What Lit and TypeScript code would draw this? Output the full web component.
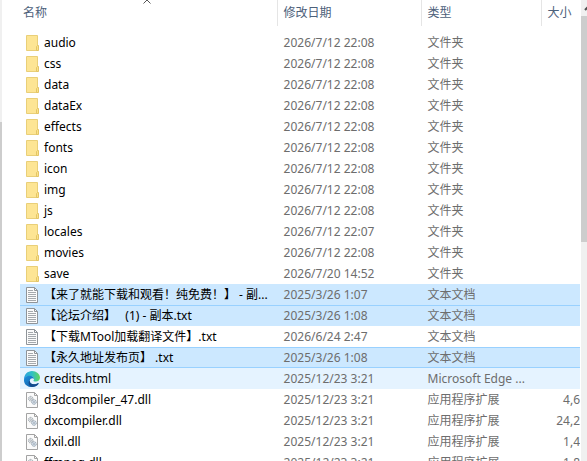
import { LitElement, html, css, svg } from "lit";
import { customElement, property, state } from "lit/decorators.js";
import { classMap } from "lit/directives/class-map.js";

type Kind = "folder" | "text" | "edge" | "dll";

interface Entry {
  name: string;
  date: string;
  kind: Kind;
  size?: string;
  mark?: "selected" | "focused" | "hover";
}

const TYPE_LABEL: Record<Kind, string> = {
  folder: "文件夹",
  text: "文本文档",
  edge: "Microsoft Edge ...",
  dll: "应用程序扩展",
};

const folder = (name: string, date = "2026/7/12 22:08"): Entry => ({ name, date, kind: "folder" });
const dll = (name: string, size: string): Entry => ({ name, date: "2025/12/23 3:21", kind: "dll", size });

const ENTRIES: Entry[] = [
  folder("audio"),
  folder("css"),
  folder("data"),
  folder("dataEx"),
  folder("effects"),
  folder("fonts"),
  folder("icon"),
  folder("img"),
  folder("js"),
  folder("locales", "2026/7/12 22:07"),
  folder("movies"),
  folder("save", "2026/7/20 14:52"),
  { name: "【来了就能下载和观看！纯免费！】 - 副...", date: "2025/3/26 1:07", kind: "text", mark: "selected" },
  { name: "【论坛介绍】   (1) - 副本.txt", date: "2025/3/26 1:08", kind: "text", mark: "selected" },
  { name: "【下载MTool加载翻译文件】.txt", date: "2026/6/24 2:47", kind: "text" },
  { name: "【永久地址发布页】 .txt", date: "2025/3/26 1:08", kind: "text", mark: "focused" },
  { name: "credits.html", date: "2025/12/23 3:21", kind: "edge", mark: "hover" },
  dll("d3dcompiler_47.dll", "4,6"),
  dll("dxcompiler.dll", "24,2"),
  dll("dxil.dll", "1,4"),
  dll("ffmpeg.dll", "1,8"),
];

const GLYPHS = {
  folder: svg`
    <path d="M2.5 .5h11v15h-11z" fill="#fde594" stroke="#e9cf78"/>
    <path d="M12.5 11.500l1-1h1v5h-2z" fill="#fbe28a" stroke="#e3c566"/>`,
  text: svg`
    <path d="M2.5 .5h8l3 3v12h-11z" fill="#fbfbfb" stroke="#8f9499"/>
    <path d="M10.500 .5v3h3" fill="none" stroke="#8f9499"/>
    <path d="M4 3.500h5M4 5.500h8M4 7.500h8M4 9.500h8M4 11.500h8M4 13.500h8" stroke="#a5a9ad"/>`,
  dll: svg`
    <path d="M2.5 .5h8l3 3v12h-11z" fill="#fbfbfb" stroke="#a3a3a3"/>
    <path d="M10.500 .5v3h3" fill="none" stroke="#a3a3a3"/>
    <circle cx="6.700" cy="6.700" r="2.300" fill="#e6eaed" stroke="#98a0a7" stroke-dasharray="1.300 .5"/>
    <circle cx="6.700" cy="6.700" r=".8" fill="#fff" stroke="#8b949c" stroke-width=".6"/>
    <circle cx="10" cy="10" r="2.300" fill="#dbe5ee" stroke="#8f9dab" stroke-dasharray="1.300 .5"/>
    <circle cx="10" cy="10" r=".8" fill="#fff" stroke="#8796a5" stroke-width=".6"/>`,
  edge: svg`
    <defs>
      <linearGradient id="top" x1="0" x2="1" y1=".5" y2=".5">
        <stop offset="0" stop-color="#2a9fe0"/><stop offset=".5" stop-color="#2fc0c4"/><stop offset="1" stop-color="#62d65a"/>
      </linearGradient>
      <linearGradient id="side" x1="0" x2="1" y1="0" y2="1">
        <stop offset="0" stop-color="#1c8fdc"/><stop offset="1" stop-color="#12579f"/>
      </linearGradient>
    </defs>
    <path d="M0 8C0 3.600 3.600 0 8 0s8 3 8 6.500c0 2.600-2 4-4.200 4-1.700 0-2.600-.6-2.300-1.100.4-.5.5-.9.5-1.400C10 6.500 8.500 5 6 5 3 5 0 7 0 10z" fill="url(#top)"/>
    <path d="M0 9C.2 6.300 3 4.600 5.600 4.700c2.600.1 4.400 1.600 4.400 3.300-1-1.300-3.800-1-4.200 1.600-.4 3 3.200 4.900 7.700 2.800.9-.4 1.400 0 .9.700C13 15 10.700 16 8 16c-4.600 0-8.200-3-8-7z" fill="url(#side)"/>
    <path d="M5.800 9.600C5.200 13 9 14.500 13.500 12.400c.9-.4 1.400 0 .9.700C12.600 15.400 10 16 8 16 4.800 15 3.600 11.300 5.800 9.600z" fill="#134a8c"/>`,
};

@customElement("file-glyph")
class FileGlyph extends LitElement {
  @property() kind: Kind = "folder";

  static styles = css`
    :host { display: block; flex: none; width: 16px; height: 16px; }
    .glyph { display: block; width: 100%; height: 100%; }
  `;

  render() {
    return html`<svg class="glyph" viewBox="0 0 16 16" aria-hidden="true">${GLYPHS[this.kind]}</svg>`;
  }
}

@customElement("app-root")
class AppRoot extends LitElement {
  @state() private ascending = true;

  static styles = css`
    :host {
      display: flex;
      height: 100vh;
      overflow: hidden;
      background: #fff;
      color: #6d6d6d;
      font: 12px/20px "Noto Sans", "Noto Sans CJK SC", sans-serif;
    }
    .nav-edge {
      flex: none;
      width: 2px;
      margin-right: 18px;
      background: linear-gradient(#f0f0f0 122px, #cdcdcd 122px);
    }
    .list { flex: 1; min-width: 0; overflow: hidden; }
    .files { width: 100%; table-layout: fixed; border-collapse: separate; border-spacing: 0; }
    .name { width: 46%; }
    .date { width: 144px; }
    .type { width: 120px; }
    th { position: relative; box-sizing: border-box; height: 26px; padding: 0; border-right: 1px solid #e5e5e5; font-weight: 400; text-align: left; }
    th:last-child { border-right: 0; }
    .sort {
      display: block;
      padding: 0 0 0 6px;
      border: 0;
      background: none;
      color: #4c607a;
      font: inherit;
      white-space: nowrap;
    }
    th:first-child .sort { padding-left: 3px; }
    .arrow { position: absolute; top: 0; left: 50%; width: 8px; height: 4px; margin-left: -5px; }
    .arrow.down { transform: scaleY(-1); }
    .spacer td { height: 6px; padding: 0; }
    .row td {
      height: 21px;
      box-sizing: border-box;
      padding: 0 0 0 6px;
      overflow: hidden;
      white-space: pre;
    }
    .row td:first-child { padding-left: 4px; color: #000; }
    .row td:last-child { padding: 0; text-align: right; }
    .label { display: flex; align-items: center; gap: 4px; }
    .row.selected td, .row.focused td { background: #cce8ff; }
    .row.selected + .row.selected td { box-shadow: inset 0 1px #99d1ff; }
    .row.focused td { box-shadow: inset 0 1px #99d1ff, inset 0 -1px #99d1ff; }
    .row.hover td { background: #e5f3ff; }
    .scroll { flex: none; display: flex; flex-direction: column; width: 6px; margin-left: 1px; background: #f0f0f0; overflow: hidden; }
    .up { height: 16px; padding: 0; border: 0; background: none; }
    .up-mark { display: block; width: 6px; height: 16px; }
    .thumb { height: 49%; background: #cdcdcd; }
  `;

  private toggle() {
    this.ascending = !this.ascending;
  }

  render() {
    return html`
      <div class="nav-edge"></div>
      <main class="list">
        <table class="files">
          <thead>
            <tr>
              <th class="name">
                <button class="sort" @click=${this.toggle}>名称</button>
                <svg class=${classMap({ arrow: true, down: !this.ascending })} viewBox="0 0 8 4" aria-hidden="true">
                  <path d="M.5 3.500 4 0l3.500 3.500" fill="none" stroke="#555"/>
                </svg>
              </th>
              <th class="date"><button class="sort">修改日期</button></th>
              <th class="type"><button class="sort">类型</button></th>
              <th><button class="sort">大小</button></th>
            </tr>
          </thead>
          <tbody>
            <tr class="spacer"><td colspan="4"></td></tr>
            ${ENTRIES.map(
              (entry) => html`
                <tr class="row ${entry.mark ?? ""}">
                  <td><div class="label"><file-glyph .kind=${entry.kind}></file-glyph><span>${entry.name}</span></div></td>
                  <td>${entry.date}</td>
                  <td>${TYPE_LABEL[entry.kind]}</td>
                  <td>${entry.size ?? ""}</td>
                </tr>
              `,
            )}
          </tbody>
        </table>
      </main>
      <div class="scroll">
        <button class="up" aria-label="向上滚动">
          <svg class="up-mark" viewBox="0 0 6 16"><path d="M4 10l4-4" fill="none" stroke="#505050" stroke-width="2"/></svg>
        </button>
        <div class="thumb"></div>
      </div>
    `;
  }
}
